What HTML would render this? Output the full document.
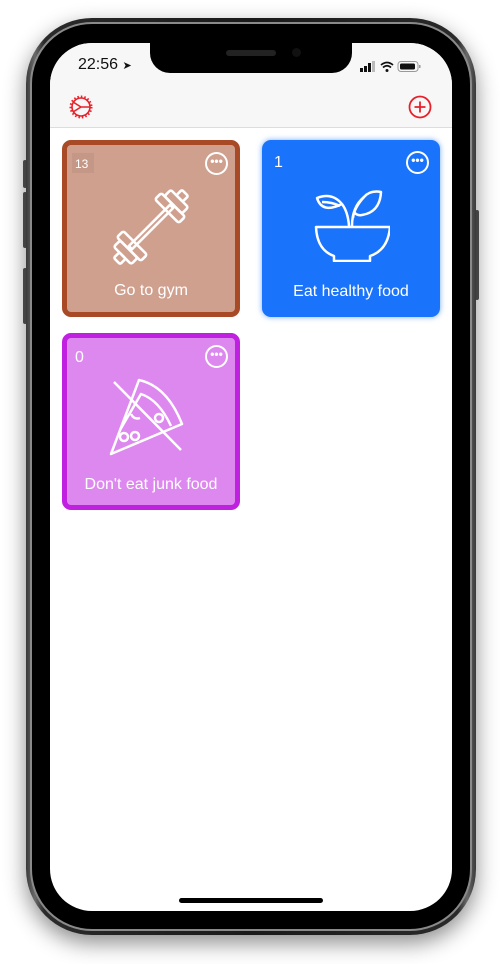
<!DOCTYPE html>
<html><head><style>
*{margin:0;padding:0;box-sizing:border-box}
body{width:502px;height:964px;background:#fff;position:relative;overflow:hidden;font-family:"Liberation Sans",sans-serif}
.frame{position:absolute;left:26px;top:18px;width:450px;height:917px;border-radius:66px;background:linear-gradient(90deg,#3a3a3a,#6a6a6a 2%,#2a2a2a 4%,#1a1a1a 50%,#2a2a2a 96%,#6a6a6a 98%,#3a3a3a);box-shadow:0 8px 22px rgba(0,0,0,.45)}
.frame2{position:absolute;left:30px;top:22px;width:442px;height:909px;border-radius:62px;border:2px solid #8a8a8a;background:#000}
.screen{position:absolute;left:50px;top:43px;width:402px;height:868px;border-radius:42px;background:#fff;overflow:hidden}
.hdr{position:absolute;left:0;top:0;width:402px;height:85px;background:#f7f7f7;border-bottom:1px solid #ddd}
.notch{position:absolute;left:100px;top:0;width:202px;height:30px;background:#000;border-radius:0 0 20px 20px}
.spk{position:absolute;left:176px;top:7px;width:50px;height:6px;border-radius:3px;background:#222}
.time{position:absolute;left:28px;top:13px;font-size:16px;color:#111}
.tile{position:absolute;width:178px;height:177px;border-radius:9px;color:#fff}
.num{position:absolute;left:12px;top:14px;font-size:14px}
.dots{position:absolute;right:11px;top:11px;width:23px;height:23px;border:2px solid #fff;border-radius:50%;text-align:center;font-size:12px;line-height:14px;font-weight:bold;letter-spacing:0}
.lbl{position:absolute;left:0;right:0;top:141px;text-align:center;font-size:16px}
</style></head><body>
<div style="position:absolute;left:23px;top:160px;width:4px;height:28px;background:#555;border-radius:2px"></div>
<div style="position:absolute;left:23px;top:192px;width:4px;height:56px;background:#555;border-radius:2px"></div>
<div style="position:absolute;left:23px;top:268px;width:4px;height:56px;background:#555;border-radius:2px"></div>
<div style="position:absolute;left:475px;top:210px;width:4px;height:90px;background:#555;border-radius:2px"></div>
<div class="frame"></div>
<div class="frame2"></div>
<div class="screen">
 <div class="hdr"></div>
 <div class="notch"></div>
 <div class="spk"></div>
 <div style="position:absolute;left:242px;top:5px;width:9px;height:9px;border-radius:50%;background:#111"></div>
 <div class="time">22:56 <span style="font-size:11px">➤</span></div>
 <svg style="position:absolute;left:310px;top:17px" width="62" height="14" viewBox="0 0 62 14">
  <rect x="0" y="8" width="3" height="4" fill="#111"/><rect x="4" y="6" width="3" height="6" fill="#111"/><rect x="8" y="3" width="3" height="9" fill="#111"/><rect x="12" y="1" width="3" height="11" fill="#bbb"/>
  <path d="M21 5 Q27 0 33 5 M23 7.5 Q27 4 31 7.5" stroke="#111" stroke-width="1.7" fill="none"/><circle cx="27" cy="10.5" r="1.5" fill="#111"/>
  <rect x="38" y="1.5" width="20" height="10" rx="3" fill="none" stroke="#999"/><rect x="40" y="3.5" width="15" height="6" rx="1.5" fill="#111"/><rect x="59" y="5" width="1.5" height="3" fill="#999"/>
 </svg>
 <svg style="position:absolute;left:19px;top:52px" width="24" height="24" viewBox="0 0 24 24" fill="none" stroke="#e8202a" stroke-width="1.6">
  <circle cx="12" cy="12" r="9"/><path d="M12 12 L4 7 M12 12 L4 17 M12 12 L21 12" /><circle cx="12" cy="12" r="10.5" stroke-dasharray="1.5 2" stroke-width="2"/>
 </svg>
 <svg style="position:absolute;left:358px;top:52px" width="24" height="24" viewBox="0 0 24 24" fill="none" stroke="#e8202a" stroke-width="1.8">
  <circle cx="12" cy="12" r="10.5"/><path d="M12 6.5V17.5M6.5 12H17.5"/>
 </svg>
 <div class="tile" style="left:12px;top:97px;background:#d0a08f;border:5px solid #a84a26">
  <div style="position:absolute;left:5px;top:8px;width:22px;height:20px;background:rgba(0,0,0,.05)"></div>
  <div class="num" style="left:8px;top:12px;font-size:12px">13</div>
  <div class="dots" style="right:7px;top:7px">•••</div>
  <svg style="position:absolute;left:34px;top:32px" width="100" height="100" viewBox="-50 -50 100 100" fill="none" stroke="#fff" stroke-width="2.3" stroke-linejoin="round">
   <g transform="rotate(-45) scale(1.12)">
    <rect x="-26" y="-2" width="52" height="4"/>
    <rect x="20" y="-15" width="8" height="30" rx="2"/>
    <rect x="28" y="-11" width="8" height="22" rx="2"/>
    <rect x="36" y="-4" width="7" height="8" rx="1.5"/>
    <rect x="-28" y="-15" width="8" height="30" rx="2"/>
    <rect x="-36" y="-11" width="8" height="22" rx="2"/>
    <rect x="-43" y="-4" width="7" height="8" rx="1.5"/>
   </g>
  </svg>
  <div class="lbl" style="top:137px">Go to gym</div>
 </div>
 <div class="tile" style="left:212px;top:97px;background:#1a73fb;box-shadow:0 0 6px rgba(26,115,251,.6)">
  <div class="num" style="font-size:16px">1</div>
  <div class="dots">•••</div>
  <svg style="position:absolute;left:50px;top:42px" width="78" height="80" viewBox="0 0 78 80" fill="none" stroke="#fff" stroke-width="2.5" stroke-linejoin="round">
   <path d="M4 45 H78 Q76 68 58 74 V79 H22 V74 Q5 68 4 45Z"/>
   <path d="M37 44 Q36 30 30 22 Q20 10 5 16 Q10 32 30 22"/>
   <path d="M40 44 Q40 25 52 15 Q58 8 69 10 Q68 30 50 33 Q45 34 42 30"/>
   <path d="M52 15 Q42 26 41 36"/>
   <path d="M10 20 Q20 20 28 24"/>
  </svg>
  <div class="lbl" style="top:143px">Eat healthy food</div>
 </div>
 <div class="tile" style="left:12px;top:290px;background:#dd88ee;border:5px solid #c020e0">
  <div class="num" style="left:8px;top:11px;font-size:16px">0</div>
  <div class="dots" style="right:7px;top:7px">•••</div>
  <svg style="position:absolute;left:40px;top:36px" width="80" height="84" viewBox="0 0 80 84" fill="none" stroke="#fff" stroke-width="2.5" stroke-linejoin="round">
   <path d="M4 80 L32 6 Q60 12 75 50 Z"/>
   <path d="M13 56 L34 20 Q52 26 64 52"/>
   <path d="M7 8 L74 76"/>
   <circle cx="17" cy="63" r="4"/><circle cx="28" cy="62" r="4"/><circle cx="52" cy="44" r="4"/>
   <path d="M24 40 Q27 46 33 44"/>
  </svg>
  <div class="lbl" style="top:138px">Don't eat junk food</div>
 </div>
 <div style="position:absolute;left:129px;top:855px;width:144px;height:5px;border-radius:3px;background:#000"></div>
</div>
</body></html>
